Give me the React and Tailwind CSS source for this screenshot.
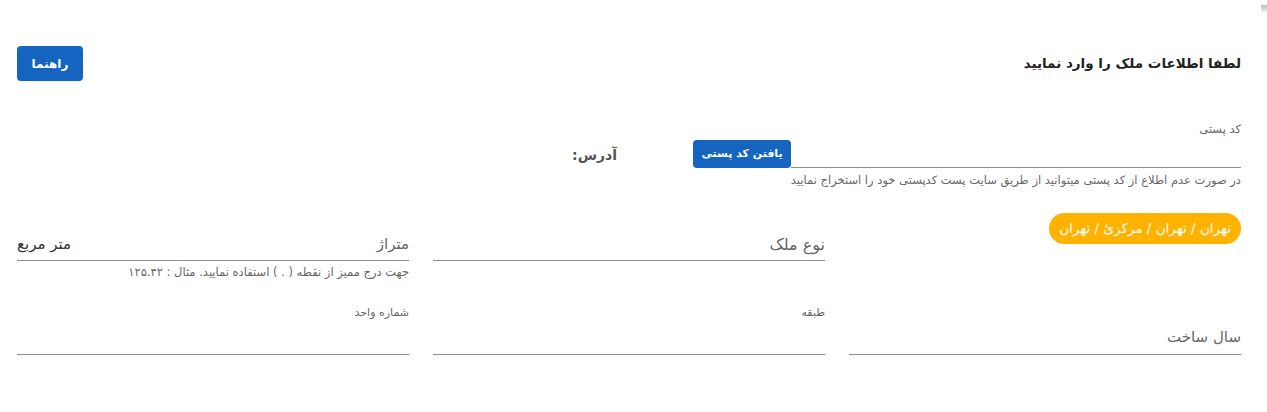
import React from "react";

export default function App() {
  return (
    <div dir="rtl" className="relative min-h-[412px] w-full bg-white pr-[26px] pl-[17px] font-['DejaVu_Sans',sans-serif] text-[#333]">
      <div className="absolute left-[1261px] top-[5px] h-[7px] w-[6px] bg-gradient-to-b from-[#bdbdbd] to-[#f0f0f0]" />
      {/* header */}
      <div className="flex items-center justify-between pt-[46px]">
        <h1 className="text-[13.5px] font-bold text-[#222]">لطفا اطلاعات ملک را وارد نمایید</h1>
        <button className="h-[35px] w-[66px] rounded-[4px] bg-[#1565c0] text-[12px] font-bold text-white">راهنما</button>
      </div>

      {/* postal code */}
      <div className="mt-[40px] flex flex-col">
        <label className="text-[11.5px] leading-[16px] text-[#666]">کد پستی</label>
        <div className="mt-[3px] flex items-end">
          <div className="h-[28px] w-[450px] border-b border-[#8f8f8f]" />
          <button className="h-[28px] w-[98px] rounded-[4px] bg-[#1565c0] text-[11px] font-bold text-white">یافتن کد پستی</button>
          <span className="mr-[76px] mb-[2px] text-[14px] font-bold text-[#555]">آدرس:</span>
        </div>
        <p className="mt-[4px] text-[11.5px] leading-[16px] text-[#666]">
          در صورت عدم اطلاع از کد پستی میتوانید از طریق سایت پست کدپستی خود را استخراج نمایید
        </p>
      </div>

      {/* row 2 */}
      <div className="mt-[25px] grid grid-cols-3 gap-x-6">
        <div className="flex items-start">
          <span className="flex h-[31px] items-center rounded-full bg-[#ffb300] px-[10px] text-[13.5px] text-white">تهران / تهران / مرکزئ / تهران</span>
        </div>
        <div className="pt-[16px]">
          <div className="flex h-[32px] items-center border-b border-[#8f8f8f] text-[16px] text-[#666]">نوع ملک</div>
        </div>
        <div className="pt-[16px]">
          <div className="flex h-[32px] items-center justify-between border-b border-[#8f8f8f] text-[15px]">
            <span className="text-[#666]">متراژ</span>
            <span className="text-[#333]">متر مربع</span>
          </div>
          <p className="mt-[3px] text-[11.5px] leading-[16px] text-[#666]">جهت درج ممیز از نقطه ( . ) استفاده نمایید. مثال : ۱۲۵.۴۲</p>
        </div>
      </div>

      {/* row 3 */}
      <div className="mt-[25px] grid grid-cols-3 gap-x-6">
        <div>
          <div className="flex h-[50px] items-end border-b border-[#8f8f8f] pb-[6px] text-[15px] text-[#666]">سال ساخت</div>
        </div>
        <div>
          <label className="block text-[11px] leading-[16px] text-[#666]">طبقه</label>
          <div className="h-[34px] border-b border-[#8f8f8f]" />
        </div>
        <div>
          <label className="block text-[11px] leading-[16px] text-[#666]">شماره واحد</label>
          <div className="h-[34px] border-b border-[#8f8f8f]" />
        </div>
      </div>
    </div>
  );
}
